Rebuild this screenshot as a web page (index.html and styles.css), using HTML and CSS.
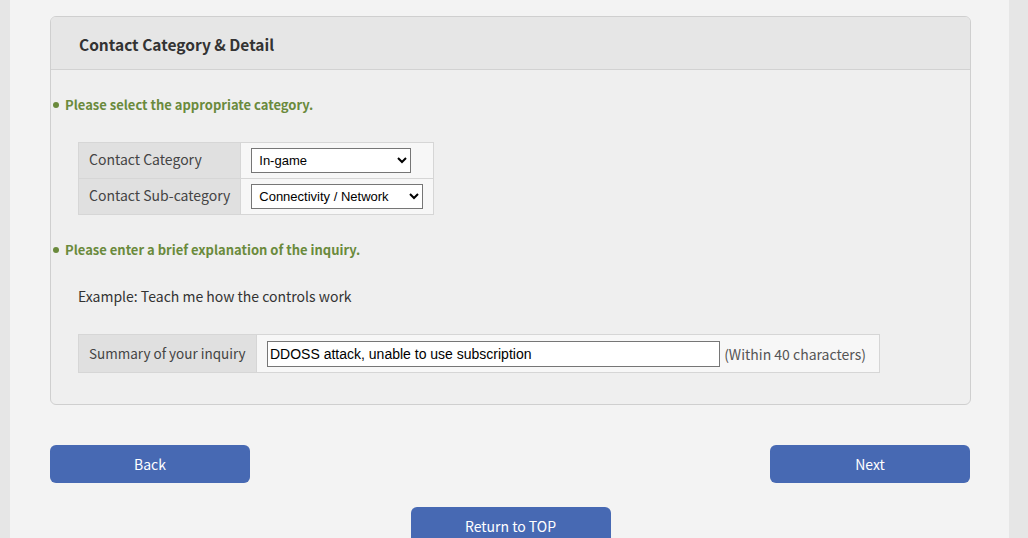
FILE: index.html
```html
<!DOCTYPE html>
<html lang="en">
<head>
  <meta charset="UTF-8">
  <meta name="viewport" content="width=device-width, initial-scale=1.0">
  <title>Contact</title>
  <link rel="stylesheet" href="styles.css">
</head>
<body>
  <div class="wrapper">
    <div class="panel">
      <div class="panel-head">
        <h2>Contact Category &amp; Detail</h2>
      </div>
      <div class="panel-body">
        <p class="note"><span class="dot"></span>Please select the appropriate category.</p>
        <table class="form-table cat-table">
          <tr>
            <th>Contact Category</th>
            <td>
              <select class="sel sel-cat">
                <option>In-game</option>
              </select>
            </td>
          </tr>
          <tr>
            <th>Contact Sub-category</th>
            <td>
              <select class="sel sel-sub">
                <option>Connectivity / Network</option>
              </select>
            </td>
          </tr>
        </table>

        <p class="note"><span class="dot"></span>Please enter a brief explanation of the inquiry.</p>
        <p class="example">Example: Teach me how the controls work</p>

        <table class="form-table sum-table">
          <tr>
            <th>Summary of your inquiry</th>
            <td>
              <input type="text" class="summary" value="DDOSS attack, unable to use subscription">
              <span class="limit">(Within 40 characters)</span>
            </td>
          </tr>
        </table>
      </div>
    </div>

    <div class="nav">
      <button class="button">Back</button>
      <button class="button">Next</button>
    </div>
    <div class="nav-top">
      <button class="button">Return to TOP</button>
    </div>
  </div>
</body>
</html>
```

FILE: styles.css
```css
body {
  margin: 0;
  padding: 0;
  background-color: #e6e6e6;
  font-family: "Noto Sans CJK JP", "Noto Sans", sans-serif;
  color: #333;
}
.wrapper {
  margin-left: 10px;
  width: 921px;
  min-height: 538px;
  padding: 16px 38px 0 40px;
  background-color: #f3f3f3;
}
.panel {
  border: 1px solid #cfcfcf;
  border-radius: 6px;
  background-color: #efefef;
  overflow: hidden;
}
.panel-head {
  background-color: #e6e6e6;
  border-bottom: 1px solid #d2d2d2;
  height: 52px;
  padding-left: 28px;
}
.panel-head h2 {
  margin: 0;
  font-size: 15.5px;
  line-height: 55px;
  font-weight: bold;
  color: #333;
}
.panel-body {
  padding: 26px 0 31px;
}
.note {
  margin: 0;
  padding-left: 2px;
  font-size: 13px;
  line-height: 18px;
  font-weight: bold;
  color: #6a8a3c;
}
.dot {
  display: inline-block;
  width: 6px;
  height: 6px;
  border-radius: 50%;
  background-color: #6a8a3c;
  margin-right: 6px;
  vertical-align: 2px;
}
.form-table {
  border-collapse: collapse;
  margin-left: 27px;
  background-color: #f7f7f7;
}
.form-table th,
.form-table td {
  border: 1px solid #d6d6d6;
  font-size: 14px;
  text-align: left;
  white-space: nowrap;
}
.form-table th {
  background-color: #e0e0e0;
  font-weight: normal;
  color: #444;
  padding: 0 10px 3px;
}
.cat-table {
  margin-top: 28px;
  margin-bottom: 26px;
}
.cat-table tr {
  height: 36px;
}
.cat-table th {
  width: 138px;
}
.cat-table td {
  padding: 0 10px;
  width: 172px;
}
.sel {
  font-family: "Liberation Sans", Arial, sans-serif;
  font-size: 13px;
  height: 25px;
  border: 1px solid #767676;
  border-radius: 0;
  background-color: #fff;
  color: #000;
  padding: 0 3px;
  vertical-align: middle;
}
.sel-cat {
  width: 160px;
}
.sel-sub {
  width: 172px;
}
.example {
  margin: 28px 0 0 27px;
  font-size: 14px;
  line-height: 18px;
  color: #333;
}
.sum-table {
  margin-top: 29px;
}
.sum-table tr {
  height: 38px;
}
.sum-table th {
  width: 157px;
  font-size: 13.5px;
  padding: 0 10px 2px;
}
.sum-table td {
  padding: 0 10px;
  width: 602px;
}
.summary {
  font-family: "Liberation Sans", Arial, sans-serif;
  font-size: 14px;
  width: 447px;
  height: 20px;
  padding: 2px;
  border: 1px solid #767676;
  vertical-align: middle;
}
.limit {
  color: #555;
  margin-left: 1px;
  vertical-align: middle;
}
.nav {
  display: flex;
  justify-content: space-between;
  padding-right: 1px;
  margin-top: 40px;
}
.nav-top {
  display: flex;
  justify-content: center;
  margin-top: 24px;
}
.button {
  width: 200px;
  height: 38px;
  background-color: #4769b3;
  color: #fff;
  border: none;
  border-radius: 6px;
  font-family: "Noto Sans CJK JP", "Noto Sans", sans-serif;
  font-size: 14px;
  cursor: pointer;
}
```
